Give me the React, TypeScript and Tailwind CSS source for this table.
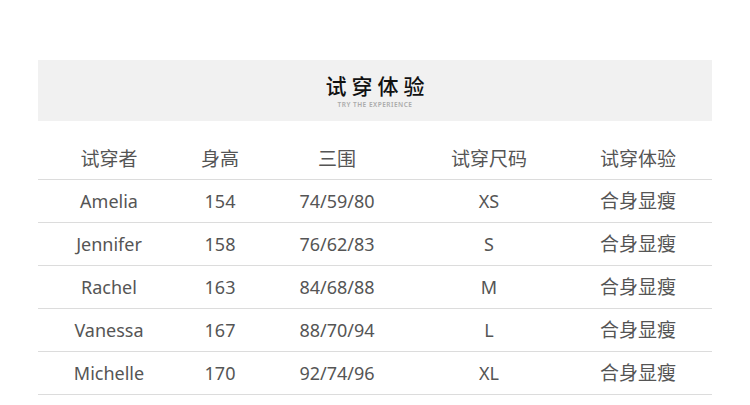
import React from "react";

const rows = [
  ["Amelia", "154", "74/59/80", "XS", "合身显瘦"],
  ["Jennifer", "158", "76/62/83", "S", "合身显瘦"],
  ["Rachel", "163", "84/68/88", "M", "合身显瘦"],
  ["Vanessa", "167", "88/70/94", "L", "合身显瘦"],
  ["Michelle", "170", "92/74/96", "XL", "合身显瘦"],
];
const heads = ["试穿者", "身高", "三围", "试穿尺码", "试穿体验"];
const widths = ["w-[142px]", "w-[80px]", "w-[154px]", "w-[150px]", "w-[148px]"];

export default function App() {
  return (
    <div
      className="w-[750px] h-[405px] bg-white overflow-hidden pt-[60px] px-[38px]"
      style={{ fontFamily: '"Noto Sans", "Noto Sans CJK SC", sans-serif' }}
    >
      <div className="h-[61px] bg-[#f1f1f1] flex flex-col items-center pt-[13px]">
        <div className="text-[21px] leading-[27px] text-[#111] tracking-[5px] pl-[5px] font-medium">
          试穿体验
        </div>
        <div className="text-[6.5px] leading-[8px] text-[#aaa] mt-[1px] tracking-[0.5px] font-semibold">
          TRY THE EXPERIENCE
        </div>
      </div>
      <div className="mt-[17px]">
        <div className="flex h-[42px] items-center border-b border-[#dcdcdc] text-[19px] text-[#555]">
          {heads.map((h, i) => (
            <div key={i} className={`${widths[i]} text-center pt-[1px]`}>
              {h}
            </div>
          ))}
        </div>
        {rows.map((r, ri) => (
          <div
            key={ri}
            className="flex h-[43px] items-center border-b border-[#dcdcdc] text-[18px] text-[#555]"
          >
            {r.map((c, i) => (
              <div key={i} className={`${widths[i]} text-center ${i === 4 ? "text-[19px]" : ""}`}>
                {c}
              </div>
            ))}
          </div>
        ))}
      </div>
    </div>
  );
}
